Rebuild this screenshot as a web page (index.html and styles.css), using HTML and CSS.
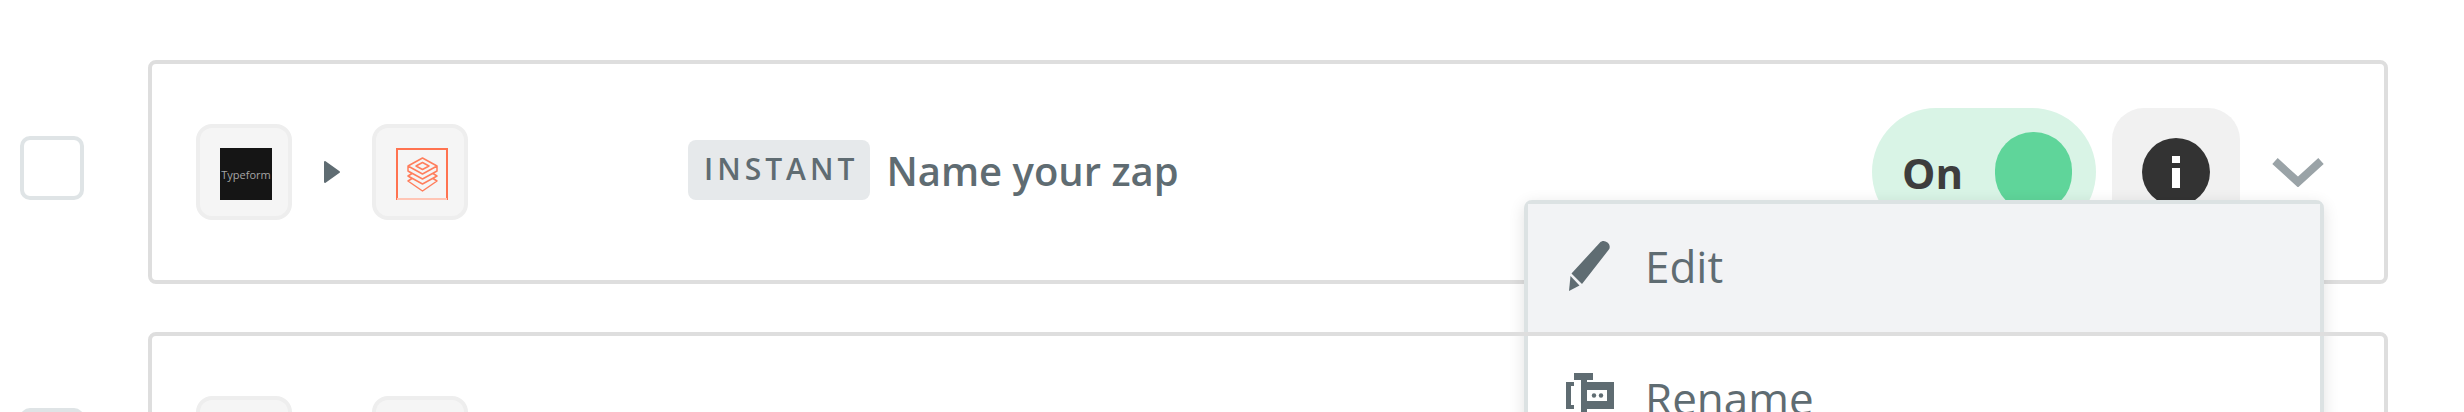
FILE: index.html
```html
<!DOCTYPE html>
<html lang="en">
<head>
    <meta charset="UTF-8">
    <title>Zaps</title>
    <link rel="stylesheet" href="styles.css">
</head>
<body>
    <div class="zap-list">
        <!-- First zap, menu open -->
        <div class="zap-row">
            <div class="checkbox"></div>
            <div class="zap-card">
                <div class="app-tile">
                    <div class="typeform-logo">Typeform</div>
                </div>
                <svg class="arrow" viewBox="0 0 18 24"><path d="M2 2 L16 12 L2 22 Z"/></svg>
                <div class="app-tile">
                    <svg class="layers-logo" viewBox="0 0 52 52">
                        <path class="layers-frame" d="M1 52 V1 H51 V52"/>
                        <path class="layers-base" d="M1 51 H51"/>
                        <path class="layers-lines" d="M26.5 10 L41 18 L26.5 26 L12 18 Z M26.5 14.500 L33 18 L26.500 21.500 L20 18 Z M12 18 V23 L26.500 31 L41 23 V18 M12 23 L16 25.500 L12 28 L26.500 36 L41 28 L37 25.500 M12 28 L16 30.500 L12 33 L26.500 43 L41 33 L37 30.500"/>
                    </svg>
                </div>
                <span class="tag">INSTANT</span>
                <span class="zap-name">Name your zap</span>
                <div class="toggle">
                    <span class="toggle-label">On</span>
                    <span class="toggle-knob"></span>
                </div>
                <div class="info-button">
                    <svg class="info-icon" viewBox="0 0 68 68">
                        <circle cx="34" cy="34" r="34" fill="#333"/>
                        <rect x="30" y="18" width="8" height="7" fill="#fff"/>
                        <rect x="30" y="30" width="8" height="20" fill="#fff"/>
                    </svg>
                </div>
                <svg class="chevron" viewBox="0 0 52 30"><path d="M3 4 L26 25 L49 4"/></svg>

                <div class="menu">
                    <div class="menu-item active">
                        <svg class="menu-icon" viewBox="0 0 48 52">
                            <path d="M34 2.500 C36 .5 39 .5 41.500 2.500 C44 4.500 44.500 8 42.500 10 L16 44 L5.500 33.500 Z"/>
                            <path d="M4.500 36 L13.500 45.500 L3 51 Z"/>
                        </svg>
                        <span>Edit</span>
                    </div>
                    <div class="menu-item">
                        <svg class="menu-icon" viewBox="0 0 48 52">
                            <path fill-rule="evenodd" d="M8 1 H27 V8 H21 V10 H48 V37 H21 V52 H15 V8 H8 Z M21 18 V29 H41 V18 Z"/>
                            <path d="M0 10 H8 V14 H5 V33 H8 V37 H0 Z"/>
                            <circle cx="28" cy="23.500" r="2.200"/>
                            <circle cx="35" cy="23.500" r="2.200"/>
                        </svg>
                        <span>Rename</span>
                    </div>
                </div>
            </div>
        </div>

        <!-- Second zap -->
        <div class="zap-row">
            <div class="checkbox"></div>
            <div class="zap-card">
                <div class="app-tile"></div>
                <svg class="arrow" viewBox="0 0 18 24"><path d="M2 2 L16 12 L2 22 Z"/></svg>
                <div class="app-tile"></div>
            </div>
        </div>
    </div>
</body>
</html>
```

FILE: styles.css
```css
* {
    box-sizing: border-box;
}

body {
    margin: 0;
    height: 412px;
    overflow: hidden;
    background-color: #fff;
    font-family: "Open Sans", sans-serif;
    color: #5f6c72;
}

.zap-list {
    display: flex;
    flex-direction: column;
    gap: 48px;
    padding: 60px 76px 0 20px;
}

.zap-row {
    display: flex;
    align-items: center;
    gap: 64px;
}

.checkbox {
    flex-shrink: 0;
    width: 64px;
    height: 64px;
    margin-bottom: 8px;
    border: 4px solid #dfe4e6;
    border-radius: 10px;
}

/* Zap card */
.zap-card {
    position: relative;
    flex: 1;
    display: flex;
    align-items: center;
    height: 224px;
    padding: 0 60px 0 44px;
    border: 4px solid #dedede;
    border-radius: 8px;
}

.app-tile {
    flex-shrink: 0;
    width: 96px;
    height: 96px;
    padding: 20px;
    background-color: #f5f5f5;
    border: 4px solid #eee;
    border-radius: 16px;
}

.typeform-logo {
    display: flex;
    align-items: center;
    justify-content: center;
    width: 52px;
    height: 52px;
    background-color: #151515;
    color: #a5a5a5;
    font-size: 11px;
}

.layers-logo {
    display: block;
    width: 52px;
    height: 52px;
    fill: none;
}

.layers-frame {
    stroke: #ff7350;
    stroke-width: 2;
}

.layers-base {
    stroke: #ffc5b5;
    stroke-width: 2;
}

.layers-lines {
    stroke: #ff7e5c;
    stroke-width: 1.500;
    stroke-linejoin: round;
}

.arrow {
    flex-shrink: 0;
    width: 18px;
    height: 24px;
    margin: 0 31px;
    fill: #5f6c72;
    stroke: #5f6c72;
    stroke-width: 2;
    stroke-linejoin: round;
}

.tag {
    margin: 0 0 4px 220px;
    padding: 0 12px 0 16px;
    height: 60px;
    line-height: 58px;
    background-color: #e6e9eb;
    border-radius: 8px;
    font-size: 30px;
    font-weight: 600;
    letter-spacing: 4px;
}

.zap-name {
    margin: 0 0 4px 16px;
    font-size: 40px;
    font-weight: 600;
}

/* On/off switch */
.toggle {
    display: flex;
    align-items: center;
    justify-content: space-between;
    width: 224px;
    height: 128px;
    margin-left: auto;
    padding: 0 24px 0 30px;
    background-color: #d9f4e6;
    border-radius: 64px;
}

.toggle-label {
    color: #3d3d3d;
    font-size: 42px;
    font-weight: 700;
}

.toggle-knob {
    width: 77px;
    height: 80px;
    background-color: #5fd59a;
    border-radius: 38px;
}

.info-button {
    display: flex;
    align-items: center;
    justify-content: center;
    width: 128px;
    height: 128px;
    margin-left: 16px;
    background-color: #f1f1f1;
    border-radius: 32px;
}

.info-icon {
    width: 68px;
    height: 68px;
}

.chevron {
    width: 52px;
    height: 30px;
    margin-left: 32px;
    fill: none;
    stroke: #9aa3a7;
    stroke-width: 8;
}

/* Dropdown menu */
.menu {
    position: absolute;
    top: 136px;
    right: 60px;
    width: 800px;
    background-color: #fff;
    border: 4px solid #dce2e3;
    border-radius: 8px;
    box-shadow: 0 4px 16px rgba(0, 0, 0, 0.12);
}

.menu-item {
    display: flex;
    align-items: center;
    gap: 31px;
    height: 132px;
    padding: 0 0 4px 38px;
    border-bottom: 4px solid #dce2e3;
    font-size: 44px;
}

.menu-item.active {
    background-color: #f2f3f5;
}

.menu-icon {
    flex-shrink: 0;
    width: 48px;
    height: 52px;
    fill: #5f6c72;
}
```
